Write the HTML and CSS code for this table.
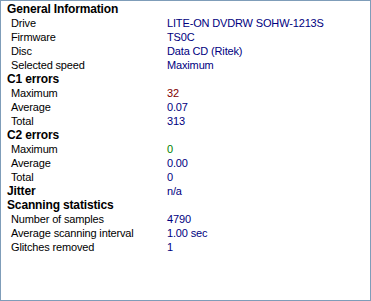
FILE: index.html
```html
<!DOCTYPE html>
<html>
<head>
<meta charset="utf-8">
<link rel="stylesheet" href="styles.css">
</head>
<body>
<div class="panel">
  <div class="row head"><span class="label">General Information</span></div>
  <div class="row"><span class="label">Drive</span><span class="val">LITE-ON DVDRW SOHW-1213S</span></div>
  <div class="row"><span class="label">Firmware</span><span class="val">TS0C</span></div>
  <div class="row"><span class="label">Disc</span><span class="val">Data CD (Ritek)</span></div>
  <div class="row"><span class="label">Selected speed</span><span class="val">Maximum</span></div>
  <div class="row head"><span class="label">C1 errors</span></div>
  <div class="row"><span class="label">Maximum</span><span class="val red">32</span></div>
  <div class="row"><span class="label">Average</span><span class="val">0.07</span></div>
  <div class="row"><span class="label">Total</span><span class="val">313</span></div>
  <div class="row head"><span class="label">C2 errors</span></div>
  <div class="row"><span class="label">Maximum</span><span class="val green">0</span></div>
  <div class="row"><span class="label">Average</span><span class="val">0.00</span></div>
  <div class="row"><span class="label">Total</span><span class="val">0</span></div>
  <div class="row head"><span class="label">Jitter</span><span class="val">n/a</span></div>
  <div class="row head"><span class="label">Scanning statistics</span></div>
  <div class="row"><span class="label">Number of samples</span><span class="val">4790</span></div>
  <div class="row"><span class="label">Average scanning interval</span><span class="val">1.00 sec</span></div>
  <div class="row"><span class="label">Glitches removed</span><span class="val">1</span></div>
</div>
</body>
</html>
```
FILE: styles.css
```css
html, body {
  margin: 0;
  padding: 0;
  background: #ffffff;
}
.panel {
  box-sizing: border-box;
  width: 371px;
  height: 301px;
  border: 1px solid #7f9db9;
  background: #ffffff;
  padding-top: 1px;
  font-family: "Liberation Sans", Arial, sans-serif;
  font-size: 11px;
  letter-spacing: -0.15px;
  color: #000000;
}
.row {
  display: grid;
  grid-template-columns: 166px 1fr;
  height: 14px;
  line-height: 14px;
  white-space: nowrap;
}
.label {
  padding-left: 10px;
}
.head .label {
  padding-left: 6px;
  font-weight: bold;
  font-size: 12px;
}
.val {
  color: #000080;
}
.head .val {
  font-weight: normal;
}
.val.red {
  color: #800000;
}
.val.green {
  color: #008000;
}
```
